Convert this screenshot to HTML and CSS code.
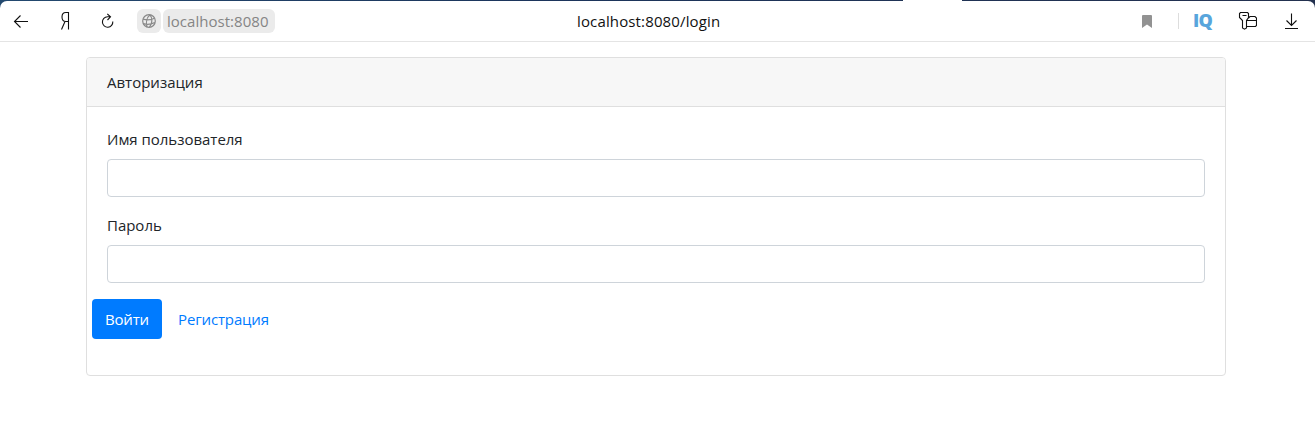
FILE: index.html
```html
<!DOCTYPE html>
<html lang="ru">
<head>
<meta charset="utf-8">
<title>Авторизация</title>
<link rel="stylesheet" href="styles.css">
</head>
<body>
<div class="frame">
  <header class="toolbar">
    <span class="tab-edge"></span>
    <div class="nav">
      <svg class="icon" width="16" height="16" viewBox="0 0 16 16"><path d="M15 8.500H1.500M7.500 2.500l-6 6 6 6"/></svg>
      <svg class="icon ya" width="12" height="20" viewBox="0 0 12 20"><path d="M9.500 18.500V1.500H6.800C4.300 1.500 3 3.400 3 6s1.300 4.500 3.800 4.500h2.700M6 10.500L2.500 18.500"/></svg>
      <svg class="icon reload" width="14" height="16" viewBox="0 0 14 16"><path d="M11.800 8.500A5.200 5.200 0 1 1 6.500 3.800h3M6.300.8l3.200 3L6.500 7"/></svg>
    </div>
    <div class="site">
      <span class="globe"><svg class="icon" width="14" height="14" viewBox="0 0 14 14"><circle cx="7" cy="7" r="6.300"/><path d="M1 5.200c3.500 1 8 .8 11.500-1M1.300 9.700c3.500 1 8 .6 11.500-1.200M8 .8C4.500 3.800 3.700 9 5 13M8 .8c2.600 3 2.500 8.500-.5 12.400"/></svg></span>
      <span class="host">localhost:8080</span>
    </div>
    <div class="address">localhost:8080/login</div>
    <div class="tools">
      <svg class="bookmark" width="10" height="13" viewBox="0 0 10 13"><path d="M1 0h8q1 0 1 1v12L5 9.500 0 13V1q0-1 1-1z"/></svg>
      <span class="divider"></span>
      <span class="iq">IQ</span>
      <svg class="icon keys" width="19" height="18" viewBox="0 0 19 18"><path d="M2.500.5h7l1 1v4l-2 3v7.500l-2 1.200-2-1.200V8.500l-3-3v-4zM4.500 3.500h4M10.500 6l1.500-1.500h5L18.500 6v7.500l-1 1h-9M8.500 8.500h10"/></svg>
      <svg class="icon download" width="13" height="16" viewBox="0 0 13 16"><path d="M6.500 .5v12M1.500 7.500l5 5 5-5M0 15.500h13"/></svg>
    </div>
  </header>
  <main class="container">
    <section class="card">
      <h1 class="card-header">Авторизация</h1>
      <form class="card-body">
        <div class="group">
          <label for="username">Имя пользователя</label>
          <input id="username" type="text">
        </div>
        <div class="group">
          <label for="password">Пароль</label>
          <input id="password" type="password">
        </div>
        <div class="actions">
          <button type="button" class="submit">Войти</button>
          <a class="register" href="#">Регистрация</a>
        </div>
      </form>
    </section>
  </main>
</div>
</body>
</html>
```
FILE: styles.css
```css
* { box-sizing: border-box; }
body {
  margin: 0;
  height: 445px;
  overflow: hidden;
  background: #fff;
  color: #212529;
  font: 15px/24px "Open Sans", "Noto Sans", sans-serif;
}
.frame {
  height: 445px;
  padding-top: 1px;
  background: linear-gradient(90deg, #23496f, #1c355c 40%, #23314f) 0 0 / 100% 12px no-repeat;
}
.toolbar {
  position: relative;
  display: flex;
  align-items: center;
  height: 41px;
  border-bottom: 1px solid #e4e4e4;
  border-radius: 7px 7px 0 0;
  background: #fff;
}
.tab-edge {
  position: absolute;
  top: -1px;
  left: 903px;
  width: 59px;
  height: 2px;
  background: #fff;
}
.icon { display: block; fill: none; stroke: #111; stroke-width: 1.1; }
.nav { display: flex; align-items: center; width: 137px; padding-left: 13px; }
.ya { margin-left: 30px; }
.reload { margin-left: 30px; }
.site { display: flex; gap: 2px; width: 440px; }
.globe {
  display: flex;
  align-items: center;
  justify-content: center;
  width: 24px;
  height: 24px;
  border-radius: 6px;
  background: #ebebeb;
}
.globe .icon { stroke: #888; stroke-width: 1.2; }
.host {
  width: 112px;
  height: 24px;
  padding-left: 4px;
  border-radius: 6px;
  background: #ebebeb;
  color: #858585;
  letter-spacing: 0.03px;
}
.address { flex: 1; color: #111; letter-spacing: 0.14px; }
.tools { display: flex; align-items: center; width: 174px; }
.bookmark { margin-left: 1px; fill: #929292; }
.divider { width: 1px; height: 16px; margin-left: 26px; background: #ddd; }
.iq {
  width: 20px;
  margin: -2px 0 0 14px;
  color: #58a5dc;
  font-size: 18px;
  font-weight: 800;
  letter-spacing: -0.8px;
}
.keys { margin-left: 25px; }
.download { margin-left: 28px; }
.container { width: 1140px; margin: 15px 0 0 86px; }
.card { height: 319px; border: 1px solid #dfdfdf; border-radius: 4px; background: #fff; }
.card-header {
  height: 49px;
  margin: 0;
  padding: 12px 20px;
  border-bottom: 1px solid #dfdfdf;
  border-radius: 3px 3px 0 0;
  background: #f7f7f7;
  font: inherit;
}
.card-body { padding: 20px; }
.group { margin-bottom: 16px; }
.group label { display: block; height: 24px; margin-bottom: 8px; letter-spacing: -0.02px; }
.group input {
  display: block;
  width: 100%;
  height: 38px;
  padding: 6px 12px;
  border: 1px solid #ced4da;
  border-radius: 4px;
  background: #fff;
}
.actions { display: flex; align-items: center; margin-left: -15px; }
.submit {
  width: 70px;
  height: 40px;
  padding: 0 0 0 13px;
  border: 0;
  border-radius: 4px;
  background: #007bff;
  color: #fff;
  font: inherit;
  letter-spacing: -0.2px;
  text-align: left;
}
.register { margin-left: 16px; color: #007bff; letter-spacing: -0.14px; text-decoration: none; }
```
